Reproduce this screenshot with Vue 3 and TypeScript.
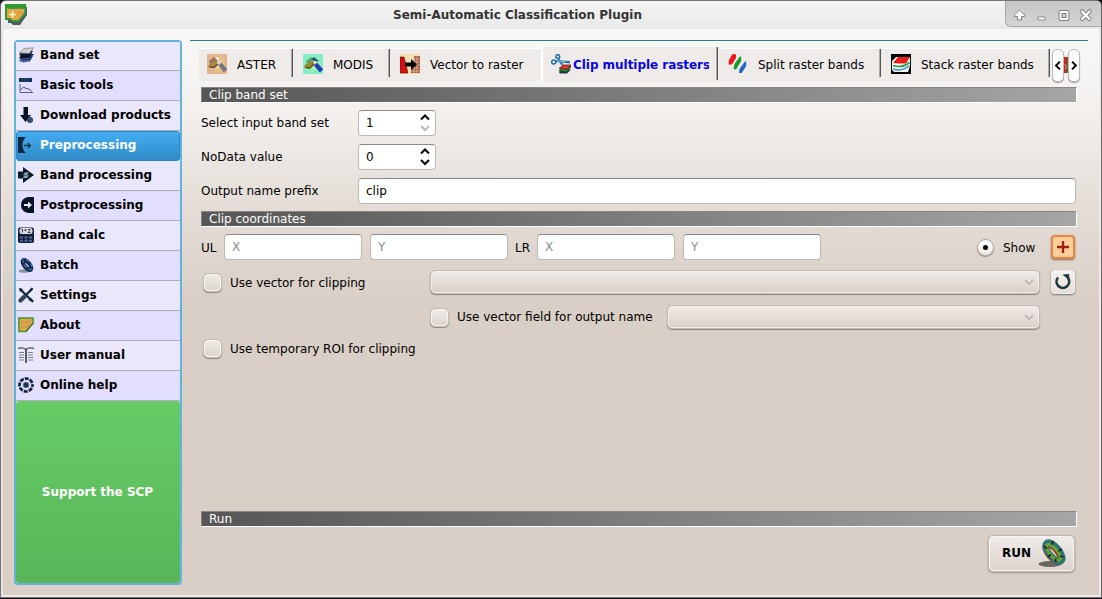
<script setup lang="ts">
import { ref } from 'vue'

interface Item {
  label: string
  art: string
}

const menu: Item[] = [
  { label: 'Band set', art: '<path d="m1 14 3-5h11l-3 5.500-7 1z" fill="#4668a8"/><path d="m1 11 3-4h12l-4 5.500-7 .7z" fill="#0a1836"/><path d="m1 12 10-.500 4-4" fill="none" stroke="#7793c7" stroke-width=".6"/><path d="m1 8 3-4h11l-3 5-7 .6z" fill="#0b1630"/><path d="m1 6 5-4.500 9.500-.7L11.500 6.500z" fill="#cfd1cf" stroke="#68717b" stroke-width=".6"/>' },
  { label: 'Basic tools', art: '<path d="M1 1h13v4H1z" fill="#163057"/><path d="M4 1v4m3-4v4m3-4v4" stroke="#416b9d" stroke-width=".5"/><path d="M2 7v8.500h13" fill="none" stroke="#4c5664" stroke-width=".9"/><path d="M2.500 13l3-3 2.500 1.500 3 .5 3 2.500" fill="none" stroke="#4c5664"/>' },
  { label: 'Download products', art: '<path d="M5.500 0h4.500v8h3l-5.500 7L2 8h3.500z" fill="#081326"/><circle cx="12" cy="13" r="3" fill="#29435f"/><path d="m10 12.500 4-1m-3 4 3-2" stroke="#5e7891" stroke-width=".6"/>' },
  { label: 'Preprocessing', art: '<path d="M0 0h8q-3.500 3-3.500 8T8 16H0z" fill="#122941"/><path d="M6 8.500h6M9.800 6l2.500 2.500L9.800 11" fill="none" stroke="#173650" stroke-width="1.500"/>' },
  { label: 'Band processing', art: '<path d="M0 4.500h5V0l11 8-11 8v-4.500H0z" fill="#0b1a2e"/><path d="m5 7.500 2-2h4L9 8zm0 3 2-2h4l-2 2.500H5z" fill="#9bacbf"/><path d="m5 9 2-1h4L9 9.500z" fill="#5c718c"/>' },
  { label: 'Postprocessing', art: '<path d="M16 0v16h-6Q3 14.500 3 8t7-8z" fill="#081426"/><path d="M6 7h4V4.500l4 3.500-4 3.500V9H6z" fill="#dce9f2"/>' },
  { label: 'Band calc', art: '<rect y=".5" width="16" height="15.500" rx="2" fill="#142039"/><rect x="1.500" y="1" width="13" height="6" rx="2.500" fill="#dce0e5"/><path d="m3.500 3 1-.8v3.300M7.500 2.200v2M6.500 3.200h2M10 2.500h2v1l-2 2h2.500" fill="none" stroke="#222c3c" stroke-width=".9"/><path d="M2 9.500h3v2H2zm4.500 0h3v2h-3zm4.500 0h3v2h-3zM2 12.800h3v2H2zm4.500 0h3v2h-3zm4.500 0h3v2h-3z" fill="#52689e"/>' },
  { label: 'Batch', art: '<ellipse cx="6.500" cy="14" rx="6" ry="1.700" fill="#8b91a1"/><g transform="rotate(50 9 8)"><ellipse cx="9" cy="8" rx="6" ry="2.600" fill="none" stroke="#102447" stroke-width="4"/><ellipse cx="9" cy="7.300" rx="6" ry="3" fill="none" stroke="#356b9f" stroke-width="1.600" stroke-dasharray="4 1.500"/></g>' },
  { label: 'Settings', art: '<path d="m3 3 10 10M13.500 2.500 5 11" stroke="#15253b" stroke-width="2.200"/><path d="m1 1 3 .5 1 2L3.500 5 1.500 4zM11 3.500 13.500 .5l2 1.500-3 3zM10.500 13l2-2.500 3.500 3.500-1.500 1.500z" fill="#15253b"/><path d="m2.500 13.500 4-4" stroke="#31435b" stroke-width="4.200" stroke-linecap="round"/>' },
  { label: 'About', art: '<path d="M.7 1h14.500v5L8 14.500H1z" fill="#e0a449" stroke="#43982f" stroke-width="1.500"/><path d="m3 6 3-2 2 2 4-3M3 11l3-2 2 2 4-5" fill="none" stroke="#b9804e" stroke-width=".8"/><path d="m8 14.500 7.200-8" stroke="#356225"/>' },
  { label: 'User manual', art: '<path d="M0 1.500q5-1.500 8 1 3-2.500 8-1" fill="none" stroke="#424b53" stroke-width="1.200"/><path d="M8 2.500V16" stroke="#424b53" stroke-width="1.800"/><path d="M1 5.500h5M1 8h5M1 10.500h5M1 13h5m4-7.500h5M10 8h5m-5 2.500h5m-5 2.500h5" stroke="#77808b"/>' },
  { label: 'Online help', art: '<circle cx="8" cy="8" r="6.500" fill="none" stroke="#13223a" stroke-width="2.700" stroke-dasharray="4 1.105" stroke-dashoffset="2"/><circle cx="8" cy="8" r="3" fill="#1c3556" stroke="#8798ad" stroke-width=".8"/>' },
]

const tabs: (Item & { kind: string })[] = [
  { label: 'ASTER', kind: 'aster', art: '<defs><radialGradient id="warm"><stop stop-color="#f9e7b2"/><stop offset=".65" stop-color="#e9c083"/><stop offset="1" stop-color="#dfb396"/></radialGradient></defs><rect width="20" height="20" rx="1" fill="url(#warm)"/><path d="m2 7 5-4 4 3-4 4H3z" fill="#94755e"/><path d="m1 12 4-4 5-1 2 3-5 4H2z" fill="#a9873c"/><path d="m3 13 4 .5 4-3.500" stroke="#5b4a38" stroke-width="1.400" fill="none"/><path d="m8 4 2-1 2 1.500-1 2z" fill="#f8efd7"/><path d="m10 7 3-2 2.500 3-2.500 3-3-1z" fill="#d8d3bc"/><path d="m13 10 5.500 7" stroke="#737580" stroke-width="4.400"/>' },
  { label: 'MODIS', kind: 'modis', art: '<defs><radialGradient id="mint"><stop stop-color="#e5ffb9"/><stop offset=".65" stop-color="#92f3b0"/><stop offset="1" stop-color="#7feccb"/></radialGradient></defs><rect width="20" height="20" rx="1" fill="url(#mint)"/><path d="m3 7 5-4 4 3-4 4-4-.5z" fill="#58a578"/><path d="m1 12 4-4 5-1 2 3-5 4.500H2z" fill="#948b2e"/><path d="m3 13.500 4 .5 4-4" stroke="#4a5324" stroke-width="1.400" fill="none"/><path d="m8 5 3-2 5 4-3 1z" fill="#22558a"/><path d="m10 7 3 0 2 3-3 1z" fill="#dcefd0"/><path d="m12.500 10 6 7" stroke="#263cb7" stroke-width="4.400"/>' },
  { label: 'Vector to raster', kind: 'vector', art: '<path d="M0 0h20v20H0z" fill="#f1e0b4"/><path d="M0 3h4l4 16H0z" fill="#d50c12" stroke="#7c1b13" stroke-width=".7"/><path d="M14 2h6v17h-9v-5h3z" fill="#a95846"/><path d="M11 17h9m-9-3h9m-6-3h6m-6-3h6m-6-3h6M14 2v18m3-18v18" stroke="#e4c69d" stroke-width=".7"/><path d="M5 8.500h6V5l6 5.500-6 5.500v-3.500H5z" fill="#060606"/><path d="M8 15h2.500v4H8z" fill="#f4e3bd"/>' },
  { label: 'Clip multiple rasters', kind: 'clip', art: '<path d="m8 18.500 3-3h9l-4 4H9z" fill="#24354b"/><path d="m8 17 4-4.500h8L16 18z" fill="#1b9a38" stroke="#172a28" stroke-width=".7"/><path d="m8 14.500 4-3.500h8l-4 4.500z" fill="#e43428" stroke="#3a1c1c" stroke-width=".7"/><path d="M4.500 6 19 7v2.500L4.500 8z" fill="#2b78a9"/><path d="m7 3 5.500 7.500-2.500.5-4.500-8z" fill="#2b78a9"/><path d="m6 7.200 8 .5" stroke="#9acbe0" stroke-width=".9"/><circle cx="2.700" cy="8" r="2" fill="#e9f1f3" stroke="#246e9b" stroke-width="1.500"/><circle cx="6.800" cy="2.600" r="1.900" fill="#e9f1f3" stroke="#246e9b" stroke-width="1.500"/>' },
  { label: 'Split raster bands', kind: 'split', art: '<path d="M1 6 4.200.3H8V4L4 10.500H.5z" fill="#ef1919"/><path d="m5.500 15 1-5 5-7 1.700-.8V7L8 15.500z" fill="#159b2b"/><path d="m11 19 .5-4 5-7 1.700-.8V12l-4.500 7z" fill="#2466c5"/>' },
  { label: 'Stack raster bands', kind: 'stack', art: '<path d="M0 0h20v20H0z" fill="#020202"/><path d="m1 7 4-4h14v9l-2 6H3l-2-2z" fill="#f5f8f5"/><path d="m2 9 5-6h12l-4 6.500H8z" fill="#ef1b19"/><path d="M2 11.500q9 3 16.500-3" fill="none" stroke="#2d9c3b" stroke-width="1.700"/><path d="M2 15q9 3 16.500-3.500" fill="none" stroke="#4389c6" stroke-width="1.500"/>' },
]

const current = ref('Preprocessing')
const bandSet = ref(1)
const nodata = ref(0)
const prefix = ref('clip')
const coordinates = ref(['', '', '', ''])
const show = ref(true)
</script>

<template>
  <div class="desktop">
    <div class="window">
      <header class="titlebar">
        <svg class="app-icon" viewBox="0 0 22 21"><path d="M2 3h20v8l-7 10H8l-2-2H3z" fill="#4d5c60"/><path d="M0 0h21v9l-7 9H8l-3-2H0z" fill="#2f9a2b"/><path d="M2 5h17v4l-6 7H8l-3-2H2z" fill="#e7a441"/><path d="M1 4.500h19M19.500 5v4L13 17H8" fill="none" stroke="#4f9a78" stroke-dasharray="2 1"/><path d="M4 10.500h7M7.500 7v7" stroke="#fff7d5" stroke-width="1.500"/><path d="m12 11 3-3 3 1" fill="none" stroke="#cf8a3a"/></svg>
        <span class="title">Semi-Automatic Classification Plugin</span>
        <div class="controls">
          <svg viewBox="0 0 96 26" fill="none" stroke-linejoin="round"><path d="m14.500 10 5 5v1.500h-3V20h-4v-3.500h-3V15z" fill="#fff" stroke="#848484"/><path d="M33 17h7v3h-7z" fill="#fff" stroke="#888"/><path d="M55.500 12h7v7h-7z" stroke="#808080" stroke-width="3.800"/><path d="M55.500 12h7v7h-7z" stroke="#fff" stroke-width="1.800"/><path d="m77 11.500 7.500 7.500m0-7.500L77 19" stroke="#838383" stroke-width="4.500" stroke-linecap="round"/><path d="m77 11.500 7.500 7.500m0-7.500L77 19" stroke="#fff" stroke-width="2.400" stroke-linecap="round"/></svg>
        </div>
      </header>
      <div class="body">
        <nav class="sidebar">
          <div v-for="item in menu" :key="item.label" class="entry" :class="{ selected: item.label === current }" @click="current = item.label">
            <svg viewBox="0 0 16 16" v-html="item.art"></svg><span>{{ item.label }}</span>
          </div>
          <div class="support">Support the SCP</div>
        </nav>
        <main>
          <div class="tabs">
            <div v-for="tab in tabs" :key="tab.kind" class="tab" :class="tab.kind">
              <svg viewBox="0 0 20 20" v-html="tab.art"></svg><span>{{ tab.label }}</span>
            </div>
            <div class="scrollers">
              <button><svg viewBox="0 0 11 32"><path d="m8 12-4 4 4 4"/></svg></button>
              <svg class="peek" viewBox="0 0 5 20"><path d="M0 0h5v20H0z" fill="#dd201b"/><path d="M5 0 3 4l1 3-2 4 1.500 4-1.500 5h3z" fill="#426b32"/><path d="m1 9 2 3-1 3" stroke="#e8c4a9" fill="none"/></svg>
              <button><svg viewBox="0 0 11 32"><path d="m4 12 4 4-4 4"/></svg></button>
            </div>
          </div>
          <div class="panel">
            <h2>Clip band set</h2>
            <div class="field first">
              <label>Select input band set</label>
              <div class="spin"><span>{{ bandSet }}</span><svg viewBox="0 0 10 18"><path d="m1 5.500 4-4 4 4"/><path class="off" d="m1 12 4 4 4-4"/></svg></div>
            </div>
            <div class="field">
              <label>NoData value</label>
              <div class="spin"><span>{{ nodata }}</span><svg viewBox="0 0 10 18"><path d="m1 5.500 4-4 4 4"/><path d="m1 12 4 4 4-4"/></svg></div>
            </div>
            <div class="field">
              <label>Output name prefix</label>
              <input v-model="prefix" class="prefix">
            </div>
            <h2 class="coord-title">Clip coordinates</h2>
            <div class="coords">
              <span class="ul">UL</span>
              <input v-model="coordinates[0]" placeholder="X"><input v-model="coordinates[1]" placeholder="Y">
              <span class="lr">LR</span>
              <input v-model="coordinates[2]" placeholder="X"><input v-model="coordinates[3]" placeholder="Y">
              <div class="show" @click="show = !show"><i class="radio"><b v-if="show"></b></i><span>Show</span></div>
              <button class="plus"><svg viewBox="0 0 20 20"><path d="M10 4v12M4 10h12" stroke="#a51e18" stroke-width="2.300"/></svg></button>
            </div>
            <div class="option vector">
              <i class="check"></i><span>Use vector for clipping</span>
              <div class="combo wide"><svg viewBox="0 0 10 6"><path d="m1 1 4 4 4-4"/></svg></div>
              <button class="refresh"><svg viewBox="0 0 20 20"><path d="M5 5.500A6.300 6.300 0 1 0 15 6" fill="none" stroke="#1f363b" stroke-width="2.600"/><path d="m9.500 2.500 6.500-.500.500 6.500z" fill="#1f363b"/></svg></button>
            </div>
            <div class="option name">
              <i class="check"></i><span>Use vector field for output name</span>
              <div class="combo narrow"><svg viewBox="0 0 10 6"><path d="m1 1 4 4 4-4"/></svg></div>
            </div>
            <div class="option roi"><i class="check"></i><span>Use temporary ROI for clipping</span></div>
            <h2 class="run-title">Run</h2>
            <button class="run">RUN
              <svg viewBox="0 0 30 30" fill="none"><ellipse cx="12" cy="26" rx="11.500" ry="3" fill="#6b6561"/><g transform="rotate(50 16 14)"><ellipse cx="16" cy="16" rx="10.500" ry="4.500" stroke="#b03a2a" stroke-width="5"/><ellipse cx="16" cy="14" rx="11.500" ry="5" stroke="#2f7377" stroke-width="6.500"/><ellipse cx="16" cy="14.600" rx="10" ry="3.800" stroke="#6ca52c" stroke-width="2.800"/><path d="M7 7.500 9 11m10-5-1 4m8 0-3 2M5 18l4-1m7 5v-4m9 1-3-2" stroke="#12231d" stroke-width="1.600"/></g></svg>
            </button>
          </div>
        </main>
      </div>
    </div>
  </div>
</template>

<style>
body { margin: 0; background: #101010; }
</style>

<style scoped>
* { box-sizing: border-box; }
svg { display: block; flex: none; }
button { padding: 0; font: inherit; color: inherit; }
.desktop { width: 1102px; height: 599px; overflow: hidden; background: #101010; font: 12px/16px "DejaVu Sans", sans-serif; color: #000; white-space: nowrap; }
.window { height: 598px; border: 1px solid #77727a; border-right-color: #666; border-radius: 6px 6px 0 0; box-shadow: inset 2px 0 #e8e4e2, inset -2px -2px #edeae8; background: linear-gradient(#faf9f8 0, #f7f5f4 70px, #f1eeeb 120px, #e4ddd7 205px, #d9cfc6 300px, #d9cfc6); overflow: hidden; }
.titlebar { height: 28px; display: flex; align-items: flex-start; background: linear-gradient(#f4f4f4, #e9e9e9); }
.app-icon { width: 22px; height: 21px; margin: 3px 0 0 4px; }
.title { flex: 1; margin: 6px 0 0 366px; font-weight: bold; color: #343434; }
.controls { width: 96px; height: 26px; border: solid #a7a7a7; border-width: 0 0 1px 1px; border-radius: 0 0 0 6px; background: linear-gradient(#c5c5c5, #d5d5d5); }
.controls svg { width: 96px; height: 26px; margin: -1px 0 0 -1px; }
.body { display: flex; height: 568px; padding: 11px 11px 12px 13px; }
.sidebar { width: 168px; height: 545px; border: 2px solid #64b3df; border-radius: 4px; background: #eae7fa; display: flex; flex-direction: column; }
.entry { height: 30px; flex: none; border-bottom: 1px solid #b1aeb8; padding-left: 2px; display: flex; align-items: center; font-weight: bold; background: #eae7fa; }
.entry:first-child { height: 29px; }
.entry:nth-child(even) { background: #e1deff; }
.entry svg { width: 16px; height: 16px; margin-bottom: 2px; }
.entry span { margin-left: 6px; transform: translateY(-1px); }
.entry.selected { border: 1px solid #2687c6; border-radius: 3px; padding-left: 1px; background: linear-gradient(#42adf2, #328bc7); color: #fff; }
.support { flex: 1; display: grid; place-items: center; padding-right: 1px; color: #fff; font-weight: bold; background: linear-gradient(#66cc66, #59b558); border-radius: 3px; }
main { width: 898px; margin-left: 8px; border-top: 1px solid #2c7e99; }
.tabs { display: flex; height: 41px; padding: 7px 0 0 9px; }
.tab { height: 33px; flex: none; display: flex; align-items: center; background: #eeebe8; border-top: 1px solid #fff; position: relative; }
.tab::after { content: ""; position: absolute; right: 1px; top: 0; width: 2px; height: 28px; background: linear-gradient(90deg, #aaa 50%, #555 50%); }
.tab svg { width: 20px; height: 20px; margin: -2px 0 0 8px; }
.tab span { margin: 0 0 1px 10px; }
.aster { width: 95px; }
.modis { width: 97px; padding-left: 1px; }
.vector.tab { width: 150px; padding-left: 1px; }
.vector.tab::after { display: none; }
.clip { width: 178px; height: 36px; margin-top: -2px; border-left: 2px solid #fff; }
.clip::after { height: 33px; }
.tab.clip svg { margin-left: 8px; margin-top: -1px; }
.tab.clip span { width: 136px; margin: 0 0 0 2px; overflow: hidden; color: #0905dc; font-weight: bold; letter-spacing: -0.04px; }
.split { width: 163px; padding-left: 1px; }
.tab.split svg { margin-left: 8px; }
.tab.split span { margin-left: 10px; }
.stack { width: 168px; padding-left: 1px; }
.stack::after { right: 0; }
.scrollers { width: 28px; margin-left: 2px; display: flex; align-items: center; }
.scrollers button { width: 12px; height: 33px; flex: none; border: 1px solid #bdb8b4; border-radius: 5px; background: #fdfdfd; box-shadow: 0 1px 1px #a6a19d; }
.scrollers button svg { width: 11px; height: 31px; margin-left: -1px; fill: none; stroke: #050505; stroke-width: 2; }
.scrollers .peek { width: 4px; height: 20px; }
.panel { width: 876px; margin: 5px 0 0 11px; display: flex; flex-direction: column; }
h2 { flex: none; width: 876px; height: 16px; margin: 0; padding-left: 7px; border: 1px solid #8a8783; border-right-color: #fff; border-bottom-color: #fff; font: 12px/15px "DejaVu Sans", sans-serif; color: #fff; background: linear-gradient(90deg, #565656, #a5a5a5); }
.field { height: 26px; margin-top: 8px; display: flex; align-items: center; }
.field.first { margin-top: 7px; }
label { width: 157px; }
.spin, input { height: 26px; border: 1px solid #bdb7b2; border-top-color: #8e8984; border-radius: 4px; background: #fff; font: 12px "DejaVu Sans", sans-serif; color: #000; outline: 0; }
.spin { width: 78px; display: flex; align-items: center; justify-content: space-between; padding: 0 5px 0 7px; }
.spin svg { width: 10px; height: 18px; fill: none; stroke: #080808; stroke-width: 2; }
.spin .off { stroke: #b9b9b9; }
input { padding: 0 7px; width: 138px; }
input::placeholder { color: #8b8b8b; opacity: 1; }
.prefix { width: 718px; }
.coord-title { margin-top: 7px; }
.coords { margin-top: 7px; height: 26px; display: flex; align-items: center; }
.coords input + input { margin-left: 8px; }
.ul { width: 23px; }
.lr { width: 22px; margin-left: 7px; }
.ul, .lr, .show span { padding-top: 1px; }
.show { display: flex; align-items: center; margin-left: 156px; }
.show span { margin-left: 9px; }
.radio { width: 17px; height: 17px; border: 1px solid #aca5a0; border-radius: 50%; background: linear-gradient(#fff, #eeeae7); box-shadow: 0 1px 1px #8e8781; display: grid; place-items: center; }
.radio b { width: 5px; height: 5px; border-radius: 50%; background: #000; }
.plus, .refresh { width: 24px; height: 24px; flex: none; border: 1px solid #eee; border-radius: 4px; background: linear-gradient(#f5f2ef, #e6e0db); box-shadow: 0 1px 2px #77706b; display: grid; place-items: center; }
.plus { margin: 0 2px 0 auto; border: 2px solid #eb8540; background: #ffce9a; }
.plus svg, .refresh svg { width: 20px; height: 20px; }
.option { display: flex; align-items: center; }
.check { width: 17px; height: 17px; flex: none; border: 1px solid #f8f5f2; border-radius: 4px; background: linear-gradient(#eeeae6, #ded6cf); box-shadow: 0 0 0 1px #c3bab3, 0 1px 1px 1px #928a83; }
.option span { margin-left: 9px; }
.option.vector { height: 24px; margin: 10px 0 0 3px; }
.option.vector span { padding-top: 1px; }
.combo { height: 22px; border: 1px solid #f3efec; border-radius: 4px; background: linear-gradient(#efebe8, #d9d0c9); box-shadow: 0 0 0 1px #c3bab3, 0 1px 1px 1px #8d857e; display: flex; align-items: center; justify-content: flex-end; padding-right: 4px; }
.combo svg { width: 10px; height: 6px; fill: none; stroke: #b6aea8; stroke-width: 1.400; }
.wide { width: 608px; margin-left: 66px; }
.option.vector .refresh { margin: 0 2px 0 auto; }
.option.name { height: 24px; margin: 11px 0 0 230px; }
.narrow { width: 371px; margin-left: 15px; }
.option.roi { height: 20px; margin: 9px 0 0 3px; }
.option.roi span { padding-top: 1px; }
.run-title { margin-top: 153px; }
.run { width: 85px; height: 35px; margin: 9px 3px 0 auto; padding: 0 5px 2px 12px; display: flex; align-items: center; justify-content: space-between; border: 1px solid #f7f4f1; border-radius: 4px; background: linear-gradient(#f0ecea, #dcd4cd); box-shadow: 0 0 0 1px #c0b7b0, 0 1px 2px 1px #9b928b; font-weight: bold; }
.run svg { width: 30px; height: 30px; }
</style>
